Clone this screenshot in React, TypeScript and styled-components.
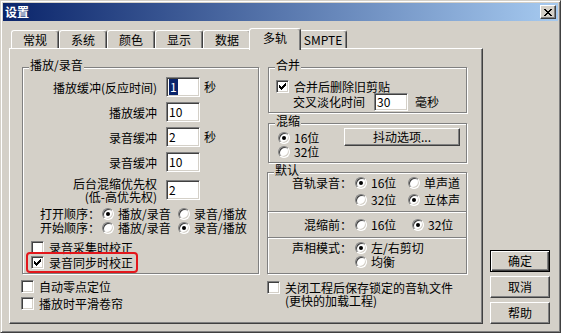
import React from 'react'
import styled, { createGlobalStyle, css } from 'styled-components'

const GlobalStyle = createGlobalStyle`
  html, body {
    margin: 0;
    padding: 0;
    background: #d4d0c8;
  }
  body {
    font-family: 'Noto Sans CJK SC', 'Liberation Sans', sans-serif;
    font-size: 12px;
    color: #000;
  }
  * {
    box-sizing: border-box;
  }
`

const raised = css`
  border: 1px solid;
  border-color: #fff #404040 #404040 #fff;
  box-shadow: inset -1px -1px 0 #808080;
`

const sunken = css`
  border: 1px solid;
  border-color: #808080 #fff #fff #808080;
  box-shadow: inset 1px 1px 0 #404040, inset -1px -1px 0 #d4d0c8;
  background: #fff;
`

const Window = styled.div`
  width: 561px;
  height: 333px;
  display: flex;
  flex-direction: column;
  padding: 2px;
  background: #d4d0c8;
  border: 1px solid;
  border-color: #d4d0c8 #404040 #404040 #d4d0c8;
  box-shadow: inset 1px 1px 0 #fff, inset -1px -1px 0 #808080;
`

const TitleBar = styled.div`
  height: 18px;
  display: flex;
  align-items: center;
  justify-content: space-between;
  padding: 0 2px;
  background: linear-gradient(to right, #0a246a, #a6caf0);
  color: #fff;
  font-weight: bold;
  line-height: 14px;
`

const CloseButton = styled.div`
  width: 16px;
  height: 14px;
  display: flex;
  align-items: center;
  justify-content: center;
  background: #d4d0c8;
  ${raised};
`

const Body = styled.div`
  flex: 1;
  display: flex;
  padding: 7px 0 6px 6px;
`

const Main = styled.div`
  width: 474px;
  display: flex;
  flex-direction: column;
`

const TabStrip = styled.div`
  height: 22px;
  display: flex;
  align-items: flex-end;
  padding-left: 2px;
  margin-bottom: -2px;
  position: relative;
  z-index: 1;
`

const Tab = styled.div<{ $active?: boolean }>`
  width: ${({ $active }) => ($active ? 52 : 48)}px;
  height: ${({ $active }) => ($active ? 22 : 18)}px;
  margin: ${({ $active }) => ($active ? '0 -2px' : '0 0 2px 0')};
  padding-bottom: ${({ $active }) => ($active ? 3 : 0)}px;
  display: flex;
  align-items: center;
  justify-content: center;
  background: #d4d0c8;
  border-top: 1px solid #fff;
  border-left: 1px solid #fff;
  border-right: 1px solid #404040;
  box-shadow: inset -1px 0 0 #808080;
  border-radius: 3px 3px 0 0;
  line-height: 12px;
  position: relative;
  z-index: ${({ $active }) => ($active ? 2 : 0)};
`

const TabPage = styled.div`
  flex: 1;
  display: flex;
  gap: 8px;
  padding: 18px 0 0 11px;
  border: 1px solid;
  border-color: #fff #404040 #404040 #fff;
  box-shadow: inset -1px -1px 0 #808080;
`

const Column = styled.div<{ $w: number }>`
  width: ${({ $w }) => $w}px;
  display: flex;
  flex-direction: column;
`

const Group = styled.div<{ $p: string; $mt?: number; $ml?: number; $row?: boolean }>`
  position: relative;
  display: flex;
  flex-direction: ${({ $row }) => ($row ? 'row' : 'column')};
  align-items: flex-start;
  padding: ${({ $p }) => $p};
  margin-top: ${({ $mt }) => $mt || 0}px;
  margin-left: ${({ $ml }) => $ml || 0}px;
  border: 1px solid #808080;
  box-shadow: inset 1px 1px 0 #fff, 1px 1px 0 #fff;
`

const Legend = styled.span`
  position: absolute;
  top: -9px;
  left: 6px;
  padding: 0 1px;
  background: #d4d0c8;
  line-height: 12px;
`

const FieldRow = styled.div<{ $mt?: number; $h?: number }>`
  display: flex;
  align-items: center;
  height: ${({ $h }) => $h || 20}px;
  margin-top: ${({ $mt }) => $mt || 0}px;
`

const FieldLabel = styled.div`
  width: 134px;
  text-align: right;
  line-height: 13px;
  white-space: nowrap;
`

const TextBox = styled.div<{ $h?: number; $ml?: number }>`
  width: 34px;
  height: ${({ $h }) => $h || 20}px;
  margin-left: ${({ $ml }) => $ml ?? 9}px;
  padding-left: 2px;
  display: flex;
  align-items: center;
  line-height: 12px;
  ${sunken};
`

const Selected = styled.span`
  background: #0a246a;
  color: #fff;
  padding: 2px 1px;
`

const Unit = styled.span<{ $ml?: number }>`
  margin-left: ${({ $ml }) => $ml ?? 4}px;
  line-height: 12px;
`

const OrderRow = styled.div<{ $mt?: number }>`
  display: flex;
  align-items: center;
  height: 14px;
  padding-left: 17px;
  margin-top: ${({ $mt }) => $mt || 0}px;
`

const OrderLabel = styled.span`
  width: 62px;
  line-height: 12px;
`

const Option = styled.span<{ $w?: number }>`
  display: inline-flex;
  align-items: center;
  height: 14px;
  width: ${({ $w }) => ($w ? `${$w}px` : 'auto')};
  line-height: 12px;
  white-space: nowrap;
`

const RadioCircle = styled.span<{ $on?: boolean }>`
  position: relative;
  flex-shrink: 0;
  width: 12px;
  height: 12px;
  margin-right: 4px;
  border-radius: 50%;
  ${sunken};
  ${({ $on }) =>
    $on &&
    css`
      &::after {
        content: '';
        position: absolute;
        left: 3px;
        top: 3px;
        width: 4px;
        height: 4px;
        border-radius: 50%;
        background: #000;
      }
    `}
`

const CheckRow = styled.div<{ $mt?: number; $ml?: number; $top?: boolean }>`
  display: flex;
  align-items: ${({ $top }) => ($top ? 'flex-start' : 'center')};
  margin-top: ${({ $mt }) => $mt || 0}px;
  margin-left: ${({ $ml }) => $ml || 0}px;
`

const CheckBox = styled.span`
  flex-shrink: 0;
  width: 13px;
  height: 13px;
  display: flex;
  align-items: center;
  justify-content: center;
  ${sunken};
`

const CheckText = styled.span<{ $lh?: number }>`
  margin-left: 5px;
  line-height: ${({ $lh }) => $lh || 13}px;
  white-space: nowrap;
`

const Highlight = styled.div`
  display: flex;
  align-items: center;
  width: 112px;
  height: 21px;
  margin: -2px 0 0 3px;
  padding-left: 3px;
  border: 2px solid #e3161b;
  border-radius: 4px;
`

const CrossRow = styled.div`
  display: flex;
  align-items: center;
  height: 18px;
  padding-left: 17px;
  line-height: 12px;
`

const RadioStack = styled.div`
  display: flex;
  flex-direction: column;
`

const PushButton = styled.div`
  width: 116px;
  height: 18px;
  margin: -3px 0 0 auto;
  display: flex;
  align-items: center;
  justify-content: center;
  line-height: 12px;
  background: #d4d0c8;
  ${raised};
`

const Section = styled.div<{ $pt: number; $pb: number }>`
  align-self: stretch;
  display: flex;
  align-items: flex-start;
  padding: ${({ $pt, $pb }) => `${$pt}px 0 ${$pb}px 0`};
`

const SectionLabel = styled.span`
  width: 84px;
  height: 14px;
  line-height: 14px;
  text-align: right;
  white-space: nowrap;
`

const OptionGrid = styled.div<{ $cols: string; $rowGap: number }>`
  display: grid;
  grid-template-columns: ${({ $cols }) => $cols};
  row-gap: ${({ $rowGap }) => $rowGap}px;
  margin-left: 3px;
`

const Separator = styled.div`
  align-self: stretch;
  height: 2px;
  border-top: 1px solid #808080;
  border-bottom: 1px solid #fff;
`

const ButtonColumn = styled.div`
  display: flex;
  flex-direction: column;
  justify-content: flex-end;
  gap: 4px;
  margin-left: 7px;
`

const DialogButton = styled.div<{ $default?: boolean }>`
  width: 60px;
  height: 22px;
  display: flex;
  align-items: center;
  justify-content: center;
  line-height: 12px;
  background: #d4d0c8;
  ${({ $default }) =>
    $default
      ? css`
          border: 1px solid #000;
          box-shadow: inset 1px 1px 0 #fff, inset -1px -1px 0 #404040, inset -2px -2px 0 #808080;
        `
      : raised};
`

const pixelPath = (cols: number[], h: number) =>
  cols.map((s, i) => `M${i} ${s}h1v${h}h-1z`).join('')

const CheckMark = () => (
  <svg width="7" height="7" viewBox="0 0 7 7">
    <path d={pixelPath([2, 3, 4, 3, 2, 1, 0], 3)} fill="#000" />
  </svg>
)

const CloseIcon = () => (
  <svg width="8" height="7" viewBox="0 0 8 7">
    <path
      d="M0 0h2v1h1v1h2V1h1V0h2v1H7v1H6v1H5v1h1v1h1v1h1v1H6V6H5V5H3v1H2v1H0V6h1V5h1V4h1V3H2V2H1V1H0z"
      fill="#000"
    />
  </svg>
)

const Radio: React.FC<{ on?: boolean; w?: number; label: string }> = ({ on, w, label }) => (
  <Option $w={w}>
    <RadioCircle $on={on} />
    {label}
  </Option>
)

const Check: React.FC<{ on?: boolean; children: React.ReactNode; lh?: number }> = ({ on, children, lh }) => (
  <>
    <CheckBox>{on && <CheckMark />}</CheckBox>
    <CheckText $lh={lh}>{children}</CheckText>
  </>
)

const tabs = ['常规', '系统', '颜色', '显示', '数据', '多轨', 'SMPTE']

const App: React.FC = () => {
  return (
    <>
      <GlobalStyle />
      <Window>
        <TitleBar>
          <span>设置</span>
          <CloseButton>
            <CloseIcon />
          </CloseButton>
        </TitleBar>
        <Body>
          <Main>
            <TabStrip>
              {tabs.map((t) => (
                <Tab key={t} $active={t === '多轨'}>
                  {t}
                </Tab>
              ))}
            </TabStrip>
            <TabPage>
              <Column $w={238}>
                <Group $p="9px 0 0 0" $ml={1}>
                  <Legend>播放/录音</Legend>
                  <FieldRow>
                    <FieldLabel>播放缓冲(反应时间)</FieldLabel>
                    <TextBox>
                      <Selected>1</Selected>
                    </TextBox>
                    <Unit>秒</Unit>
                  </FieldRow>
                  <FieldRow $mt={5}>
                    <FieldLabel>播放缓冲</FieldLabel>
                    <TextBox>10</TextBox>
                  </FieldRow>
                  <FieldRow $mt={5}>
                    <FieldLabel>录音缓冲</FieldLabel>
                    <TextBox>2</TextBox>
                    <Unit>秒</Unit>
                  </FieldRow>
                  <FieldRow $mt={5}>
                    <FieldLabel>录音缓冲</FieldLabel>
                    <TextBox>10</TextBox>
                  </FieldRow>
                  <FieldRow $mt={5} $h={26}>
                    <FieldLabel>
                      后台混缩优先权
                      <br />
                      (低-高优先权)
                    </FieldLabel>
                    <TextBox>2</TextBox>
                  </FieldRow>
                  <OrderRow $mt={4}>
                    <OrderLabel>打开顺序：</OrderLabel>
                    <Radio on w={76} label="播放/录音" />
                    <Radio label="录音/播放" />
                  </OrderRow>
                  <OrderRow>
                    <OrderLabel>开始顺序：</OrderLabel>
                    <Radio w={76} label="播放/录音" />
                    <Radio on label="录音/播放" />
                  </OrderRow>
                  <CheckRow $mt={6} $ml={8}>
                    <Check>录音采集时校正</Check>
                  </CheckRow>
                  <Highlight>
                    <CheckRow>
                      <Check on>录音同步时校正</Check>
                    </CheckRow>
                  </Highlight>
                </Group>
                <CheckRow $mt={6}>
                  <Check>自动零点定位</Check>
                </CheckRow>
                <CheckRow $mt={4}>
                  <Check>播放时平滑卷帘</Check>
                </CheckRow>
              </Column>

              <Column $w={200}>
                <Group $p="12px 0 1px 7px" $ml={1}>
                  <Legend>合并</Legend>
                  <CheckRow>
                    <Check on>合并后删除旧剪贴</Check>
                  </CheckRow>
                  <CrossRow>
                    交叉淡化时间
                    <TextBox $h={18}>30</TextBox>
                    <Unit $ml={7}>毫秒</Unit>
                  </CrossRow>
                </Group>

                <Group $p="7px 6px 3px 9px" $mt={10} $ml={1} $row>
                  <Legend>混缩</Legend>
                  <RadioStack>
                    <Radio on label="16位" />
                    <Radio label="32位" />
                  </RadioStack>
                  <PushButton>抖动选项...</PushButton>
                </Group>

                <Group $p="0" $mt={9}>
                  <Legend>默认</Legend>
                  <Section $pt={3} $pb={4}>
                    <SectionLabel>音轨录音：</SectionLabel>
                    <OptionGrid $cols="53px auto" $rowGap={3}>
                      <Radio on label="16位" />
                      <Radio label="单声道" />
                      <Radio label="32位" />
                      <Radio on label="立体声" />
                    </OptionGrid>
                  </Section>
                  <Separator />
                  <Section $pt={5} $pb={5}>
                    <SectionLabel>混缩前：</SectionLabel>
                    <OptionGrid $cols="57px auto" $rowGap={0}>
                      <Radio label="16位" />
                      <Radio on label="32位" />
                    </OptionGrid>
                  </Section>
                  <Separator />
                  <Section $pt={2} $pb={4}>
                    <SectionLabel>声相模式：</SectionLabel>
                    <OptionGrid $cols="auto" $rowGap={0}>
                      <Radio on label="左/右剪切" />
                      <Radio label="均衡" />
                    </OptionGrid>
                  </Section>
                </Group>

                <CheckRow $mt={7} $top>
                  <Check lh={13}>
                    关闭工程后保存锁定的音轨文件
                    <br />
                    (更快的加载工程)
                  </Check>
                </CheckRow>
              </Column>
            </TabPage>
          </Main>
          <ButtonColumn>
            <DialogButton $default>确定</DialogButton>
            <DialogButton>取消</DialogButton>
            <DialogButton>帮助</DialogButton>
          </ButtonColumn>
        </Body>
      </Window>
    </>
  )
}

export default App
